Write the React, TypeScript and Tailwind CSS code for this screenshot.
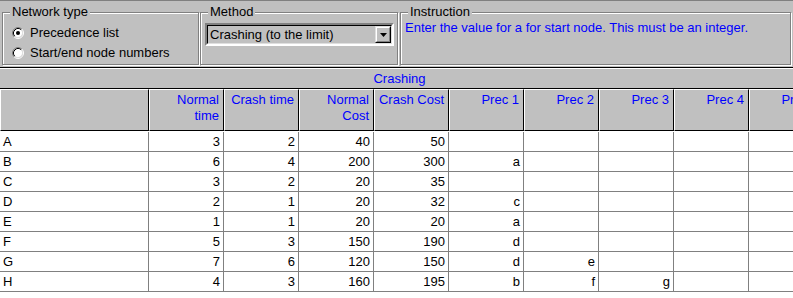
import React from "react";

const headers: string[][] = [
  ["Normal", "time"],
  ["Crash time"],
  ["Normal", "Cost"],
  ["Crash Cost"],
  ["Prec 1"],
  ["Prec 2"],
  ["Prec 3"],
  ["Prec 4"],
  ["Prec 5"],
];

const rows: string[][] = [
  ["A", "3", "2", "40", "50"],
  ["B", "6", "4", "200", "300", "a"],
  ["C", "3", "2", "20", "35"],
  ["D", "2", "1", "20", "32", "c"],
  ["E", "1", "1", "20", "20", "a"],
  ["F", "5", "3", "150", "190", "d"],
  ["G", "7", "6", "120", "150", "d", "e"],
  ["H", "4", "3", "160", "195", "b", "f", "g"],
];

function Radio({ checked }: { checked?: boolean }) {
  return (
    <svg width="12" height="12" viewBox="0 0 12 12" className="shrink-0">
      <circle cx="6" cy="6" r="4.5" fill="#ffffff" />
      <path d="M2.11 9.89 A5.5 5.5 0 0 1 9.89 2.11" fill="none" stroke="#808080" strokeWidth="1" />
      <path d="M9.89 2.11 A5.5 5.5 0 0 1 2.11 9.89" fill="none" stroke="#ffffff" strokeWidth="1" />
      <path d="M2.82 9.18 A4.5 4.5 0 0 1 9.18 2.82" fill="none" stroke="#000000" strokeWidth="1" />
      <path d="M9.18 2.82 A4.5 4.5 0 0 1 2.82 9.18" fill="none" stroke="#dfdfdf" strokeWidth="1" />
      {checked && <circle cx="6" cy="6" r="2" fill="#000000" />}
    </svg>
  );
}

function Group({
  title,
  className,
  children,
}: {
  title: string;
  className: string;
  children?: React.ReactNode;
}) {
  return (
    <div
      className={
        "relative h-[53px] shrink-0 border border-[#808080] shadow-[inset_1px_1px_0_#ffffff,1px_1px_0_#ffffff] " +
        className
      }
    >
      <div className="absolute -top-[9px] left-[7px] bg-[#c0c0c0] px-[2px] text-[13px] leading-[16px] text-black whitespace-nowrap">
        {title}
      </div>
      {children}
    </div>
  );
}

export default function App() {
  return (
    <div className="w-[793px] h-[298px] overflow-hidden bg-white font-['Liberation_Sans',Arial,sans-serif] text-[13px] text-black">
      {/* top control panel */}
      <div className="h-[67px] bg-[#c0c0c0] border-t border-[#808080] flex pt-[11px]">
        <Group title="Network type" className="ml-[2px] w-[197px]">
          <div className="flex flex-col pl-[9px] pt-[12px] gap-[4px]">
            <div className="flex items-center h-[16px] gap-[6px]">
              <Radio checked />
              <span className="leading-[16px]">Precedence list</span>
            </div>
            <div className="flex items-center h-[16px] gap-[6px]">
              <Radio />
              <span className="leading-[16px]">Start/end node numbers</span>
            </div>
          </div>
        </Group>
        <Group title="Method" className="ml-[1px] w-[198px]">
          <div className="ml-[4px] mt-[10px] w-[189px] h-[23px] flex border-2 border-t-[#808080] border-l-[#808080] border-b-white border-r-white">
            <div className="flex-1 flex border border-t-black border-l-black border-b-[#dfdfdf] border-r-[#dfdfdf] bg-[#c0c0c0]">
              <div className="flex-1 flex items-center pl-[2px] leading-[16px] whitespace-nowrap">
                Crashing (to the limit)
              </div>
              <div className="w-[16px] flex border border-t-[#dfdfdf] border-l-[#dfdfdf] border-b-black border-r-black">
                <div className="flex-1 flex items-center justify-center border border-t-white border-l-white border-b-[#808080] border-r-[#808080] bg-[#c0c0c0]">
                  <svg width="7" height="4" viewBox="0 0 7 4">
                    <path d="M0 0 H7 L3.5 4 Z" fill="#000000" />
                  </svg>
                </div>
              </div>
            </div>
          </div>
        </Group>
        <Group title="Instruction" className="ml-[2px] w-[391px]">
          <div className="pl-[4px] pt-[7px] leading-[16px] text-[#0000ff] whitespace-nowrap">
            Enter the value for a for start node. This must be an integer.
          </div>
        </Group>
      </div>

      {/* grid */}
      <div className="border-t border-black">
        <div className="h-[21px] bg-[#c0c0c0] border-t border-white border-b border-b-black flex items-center justify-center text-[#0000ff] leading-[16px]">
          <span className="ml-[6px]">Crashing</span>
        </div>
        <div className="flex h-[42px] bg-[#c0c0c0]">
          <div className="w-[149px] shrink-0 border-t border-l border-white border-r border-r-black border-b border-b-black" />
          {headers.map((h, i) => (
            <div
              key={i}
              className="w-[75px] shrink-0 border-t border-l border-white border-r border-r-black border-b border-b-black pt-[2px] pr-[4px] text-right text-[#0000ff] leading-[16px] whitespace-nowrap"
            >
              {h.map((line, j) => (
                <div key={j}>{line}</div>
              ))}
            </div>
          ))}
        </div>
        <div className="pt-[1px] font-['Liberation_Sans_Narrow','Liberation_Sans',Arial,sans-serif] text-[13px]">
          {rows.map((r, ri) => (
            <div key={ri} className="flex h-[20px] border-b border-[#808080]">
              <div className="w-[149px] shrink-0 border-r border-[#808080] pl-[3px] flex items-center leading-[16px]">
                {r[0]}
              </div>
              {Array.from({ length: 9 }).map((_, ci) => (
                <div
                  key={ci}
                  className="w-[75px] shrink-0 border-r border-[#808080] pr-[3px] flex items-center justify-end leading-[16px]"
                >
                  {r[ci + 1] ?? ""}
                </div>
              ))}
            </div>
          ))}
        </div>
      </div>
    </div>
  );
}
